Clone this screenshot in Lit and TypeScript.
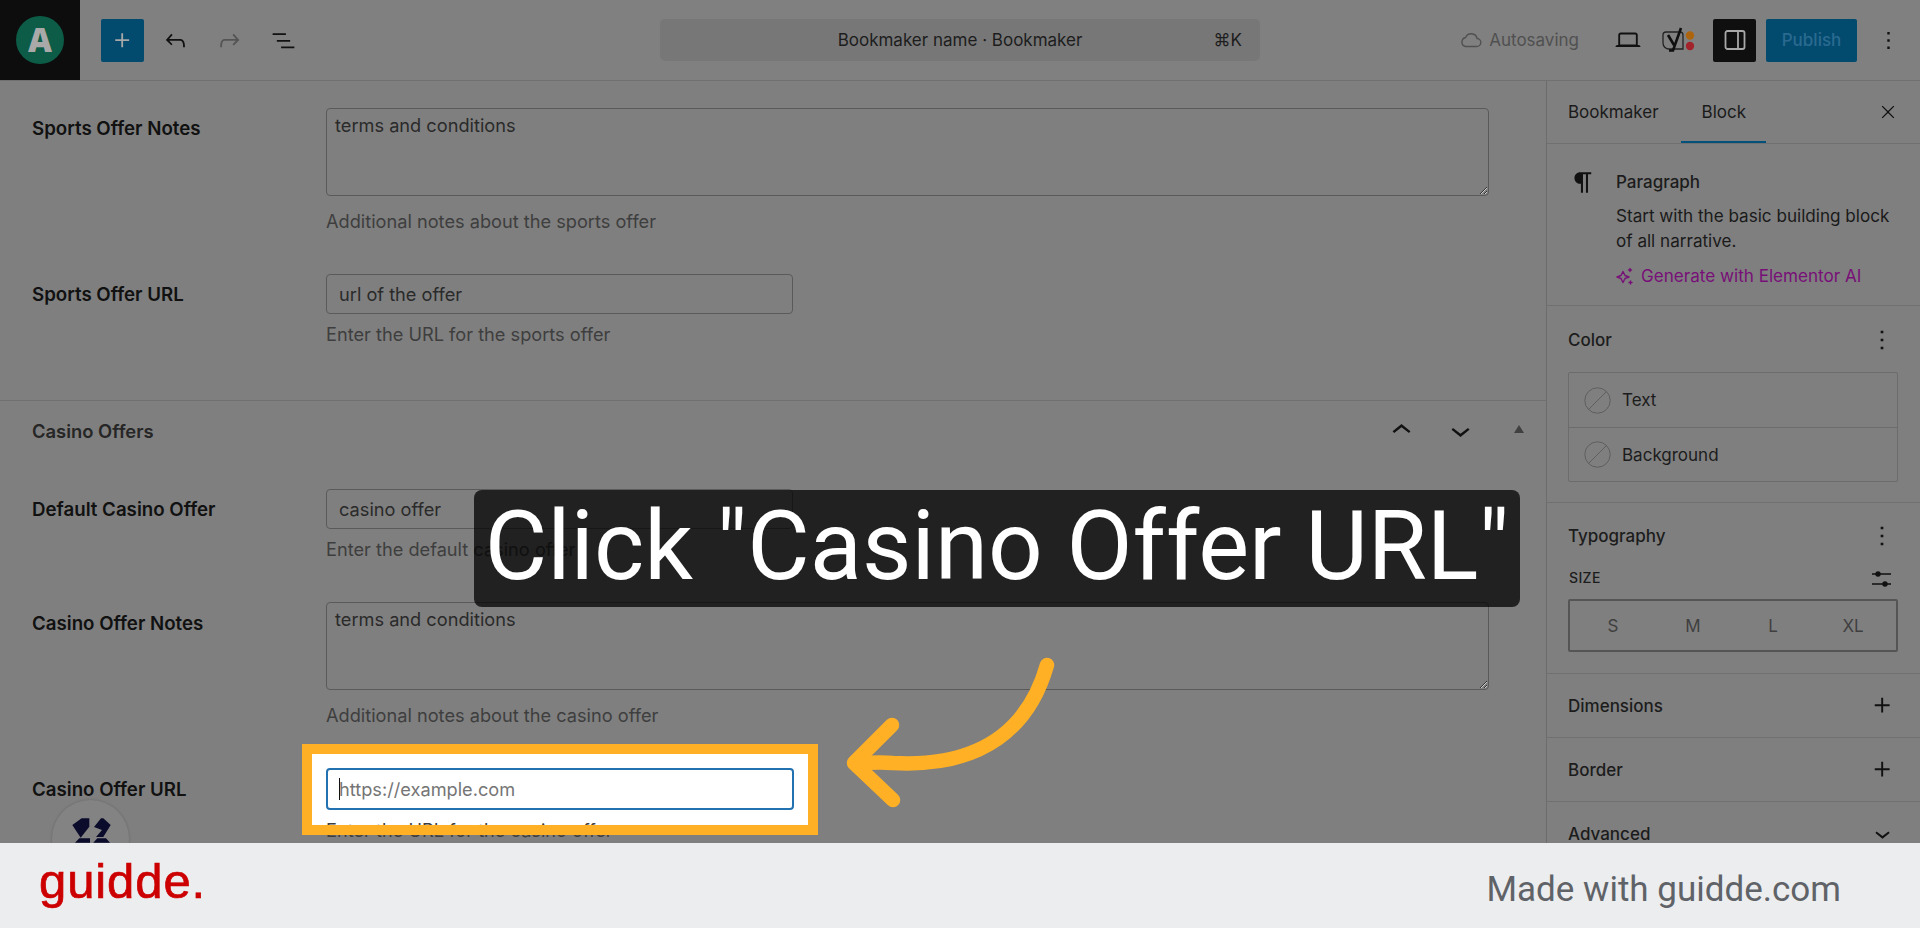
import { LitElement, html, css, svg } from "lit";
import { customElement } from "lit/decorators.js";

const icon = (d: string, size = 29, fill = "#111") => html`<svg width=${size} height=${size} viewBox="0 0 24 24" fill=${fill}><path d=${d}></path></svg>`;
const P = {
  undo: "M18.3 11.7c-.6-.6-1.4-.9-2.3-.9H6.7l2.9-3.3-1.1-1-4.5 5L8.5 16l1-1-2.7-2.7H16c.5 0 .9.2 1.3.5 1 1 1 3.4 1 4.5v.3h1.5v-.2c0-1.5 0-4.3-1.5-5.7z",
  redo: "M15.6 6.5l-1.1 1 2.9 3.3H8c-.9 0-1.7.3-2.3.9-1.4 1.5-1.4 4.2-1.4 5.6v.2h1.5v-.3c0-1.1 0-3.5 1-4.5.3-.3.7-.5 1.3-.5h9.2L14.5 15l1.1 1.1 4.6-4.6-4.6-5z",
  list: "M3 6h11v1.5H3V6zm3.5 5.5h11V13h-11v-1.5zM21 17H10v1.5h11V17z",
  plus: "M11 12.5V17.5H12.5V12.5H17.5V11H12.5V6H11V11H6V12.5H11Z",
  more: "M13 19h-2v-2h2v2zm0-6h-2v-2h2v2zm0-6h-2V5h2v2z",
  close: "m13.06 12 6.47-6.47-1.06-1.06L12 10.94 5.53 4.47 4.47 5.53 10.94 12l-6.47 6.47 1.06 1.06L12 13.06l6.47 6.47 1.06-1.06L13.06 12Z",
  up: "M6.5 12.4L12 8l5.5 4.4-.9 1.2L12 10l-4.5 3.6-1-1.2z",
  down: "M17.5 11.6L12 16l-5.5-4.4.9-1.2L12 14l4.6-3.6 1 1.2z",
  para: "M9.5 4C6.9 4 5 5.9 5 8.5S6.9 13 9.5 13h.5v7h1.6V5.6h2.3V20H15.5V5.6H18V4H9.5z",
  laptop: "M20.5 16h-.7V8c0-1.1-.9-2-2-2H6.2c-1.1 0-2 .9-2 2v8h-.7c-.8 0-1.5.7-1.5 1.5h20c0-.8-.7-1.5-1.5-1.5zM5.7 8c0-.3.2-.5.5-.5h11.6c.3 0 .5.2.5.5v7.6H5.7V8z",
};

@customElement("app-root")
export class AppRoot extends LitElement {
  static styles = css`
    :host { display: block; width: 1920px; height: 928px; overflow: hidden; position: relative; font-family: Inter, "Liberation Sans", sans-serif; color: #111; background: #7f7f7f; }
    * { box-sizing: border-box; }
    .page { display: flex; flex-direction: column; height: 928px; }

    .top { height: 81px; flex: none; display: flex; align-items: center; border-bottom: 1px solid #707070; background: #808080; position: relative; }
    .logo { width: 80px; height: 80px; background: #0d0d0d; display: flex; align-items: center; justify-content: center; flex: none; }
    .logo span { width: 48px; height: 48px; border-radius: 50%; background: #0c5c47; color: #a9a9a9; font: 800 33px/48px "Open Sans", sans-serif; text-align: center; }
    .add { width: 43px; height: 43px; margin-left: 21px; background: #034a6f; border-radius: 2px; display: flex; align-items: center; justify-content: center; flex: none; }
    .tools { display: flex; align-items: center; gap: 25px; margin-left: 17px; flex: none; }
    .cmd { position: absolute; left: 660px; top: 19px; width: 600px; height: 42px; background: #777; border-radius: 5px; display: flex; align-items: center; justify-content: center; font-size: 17px; color: #1d1d1d; }
    .cmd kbd { position: absolute; right: 18px; font: inherit; }
    .right { margin-left: auto; display: flex; align-items: center; flex: none; }
    .auto { display: flex; align-items: center; gap: 7px; color: #505050; font-size: 17px; margin-right: 34px; }
    .yoast { margin-left: 19px; width: 36px; height: 30px; flex: none; }
    .panel { width: 43px; height: 43px; background: #0f0f0f; border-radius: 2px; margin-left: 15px; display: flex; align-items: center; justify-content: center; }
    .publish { width: 91px; height: 43px; margin-left: 10px; background: #034a6f; color: #2a6a90; font-size: 17px; font-weight: 500; border-radius: 2px; display: flex; align-items: center; justify-content: center; }
    .dots { margin: 0 17px 0 17px; display: flex; }

    .body { flex: 1; min-height: 0; display: flex; overflow: hidden; position: relative; }
    .main { width: 1546px; flex: none; }
    .section { padding: 27px 57px 0 32px; }
    .s1 { height: 320px; border-bottom: 1px solid #707070; }
    .row { display: grid; grid-template-columns: 294px 1fr; margin-bottom: 43px; }
    .lab { font-size: 18.7px; font-weight: 600; line-height: 20px; padding-top: 11px; color: #111; white-space: nowrap; }
    .lab.low { padding-top: 12px; }
    .field { position: relative; min-width: 0; }
    .ta, .in { display: block; background: transparent; border: 1px solid #5a5a5a; border-radius: 4px; font: 400 18.2px/20px Inter, sans-serif; color: #2a2a2a; outline: none; margin: 0; }
    .ta { width: 100%; height: 88px; padding: 6px 8px; resize: vertical; }
    .ta + .help { margin-top: 15px; }
    .in { width: 467px; height: 40px; padding: 0 12px; }
    .help { font-size: 18.2px; line-height: 20px; color: #3e3e3e; margin-top: 10px; white-space: nowrap; position: relative; }
    .head { display: flex; align-items: center; height: 59px; margin-bottom: 1px; padding: 0 22px 0 32px; font-size: 18.4px; font-weight: 600; color: #262626; }
    .head .sp { flex: 1; }
    .head .ctrl { width: 59px; display: flex; justify-content: center; }
    .head .tri { width: 0; height: 0; border-left: 5.5px solid transparent; border-right: 5.5px solid transparent; border-bottom: 8px solid #404040; margin: 0 0 3px 24px; }
    .s2 { padding-top: 28px; }
    .hl-white { position: absolute; left: -24px; top: -24px; width: 506px; height: 81px; background: #fff; }
    .hl-ring { position: absolute; left: -24px; top: -24px; width: 516px; height: 91px; border: 10px solid #ffb024; margin: 0; z-index: 2; }
    .focus { position: relative; width: 468px; height: 42px; border: 2px solid #2271b1; border-radius: 4px; background: #fff; padding: 0 11px; font: 400 18.2px/38px Inter, sans-serif; color: #757575; outline: none; display: block; }
    .focus::placeholder { color: #757575; }
    .caret { position: absolute; left: 13px; top: 10px; width: 1px; height: 22px; background: #111; }

    .side { flex: 1; border-left: 1px solid #6c6c6c; min-width: 0; }
    .tabs { height: 63px; display: flex; align-items: center; position: relative; border-bottom: 1px solid #707070; padding-left: 21px; font-size: 17px; color: #1a1a1a; }
    .tab { margin-right: 43px; }
    .tab.on { position: relative; }
    .tab.on::after { content: ""; position: absolute; left: -21px; right: -20px; top: 39px; height: 2px; background: #03507a; }
    .tabs .x { position: absolute; right: 22px; top: 21px; display: flex; }
    .block { height: 162px; padding: 28px 21px 0; display: flex; border-bottom: 1px solid #707070; }
    .pico { width: 48px; flex: none; margin-top: -5px; }
    .block .t { font-size: 17px; line-height: 20px; font-weight: 500; color: #1c1c1c; }
    .block .d { font-size: 17.1px; line-height: 25px; color: #1a1a1a; margin-top: 11px; white-space: nowrap; }
    .gen { display: flex; align-items: center; gap: 7px; color: #780f78; font-size: 17.1px; margin-top: 12px; white-space: nowrap; }
    .pan { padding: 0 21px; border-bottom: 1px solid #707070; }
    .ph { display: flex; align-items: center; justify-content: space-between; font-size: 17px; font-weight: 500; color: #1c1c1c; margin-right: 1px; }
    .color { height: 197px; padding-top: 20px; }
    .ph.first { height: 28px; }
    .cbox { margin-top: 18px; border: 1px solid #6c6c6c; border-radius: 2px; height: 110px; width: 330px; }
    .crow { height: 54px; display: flex; align-items: center; gap: 11px; padding-left: 15px; font-size: 17px; color: #1c1c1c; }
    .crow + .crow { border-top: 1px solid #6c6c6c; }
    .typo { height: 171px; padding-top: 19px; }
    .szh { display: flex; align-items: center; justify-content: space-between; margin-top: 16px; font-size: 14px; font-weight: 500; letter-spacing: .35px; color: #1c1c1c; height: 22px; padding-left: 1px; }
    .slid { margin-right: 7px; margin-top: 3px; }
    .szb { margin-top: 11px; width: 330px; height: 53px; border: 2px solid #555; border-radius: 2px; display: grid; grid-template-columns: repeat(4, 80px); padding-left: 3px; align-items: center; font-size: 17px; color: #3f3f3f; text-align: center; }
    .acc { height: 64px; display: flex; align-items: center; justify-content: space-between; padding: 0 22px 0 21px; font-size: 17px; font-weight: 500; color: #1c1c1c; border-bottom: 1px solid #707070; flex: none; }

    .widget { position: absolute; left: 52px; top: 719px; width: 77px; height: 77px; border-radius: 50%; background: #838383; box-shadow: 0 0 3px rgba(0,0,0,.2); }

    .foot { height: 85px; flex: none; background: #ecedef; display: flex; align-items: center; justify-content: space-between; padding: 0 79px 0 39px; position: relative; z-index: 5; }
    .brand { color: #cc0000; font: 400 49px/1 "Liberation Sans", sans-serif; letter-spacing: .9px; margin-top: -8px; -webkit-text-stroke: .7px #cc0000; }
    .made { color: #5f6368; font: 400 35px/1 Roboto, sans-serif; margin-top: 8px; }

    .callout { position: absolute; left: 474px; top: 490px; width: 1046px; height: 117px; background: rgba(0,0,0,.74); border-radius: 8px; color: #fff; font: 400 96px/113px Roboto, sans-serif; text-align: center; white-space: nowrap; z-index: 4; }
    .arrow { position: absolute; left: 0; top: 0; z-index: 4; }
  `;

  private sparkle() {
    return html`<svg width="18" height="18" viewBox="0 0 18 18" fill="none" stroke="#780f78" stroke-width="1.4"><path d="M7 4.5 9 8.5 13 10 9 11.5 7 15.5 5 11.5 1 10 5 8.5z" stroke-linejoin="round"></path><path d="M14 1.5v3M12.5 3h3M14.5 14v3M13 15.5h3" stroke-linecap="round"></path></svg>`;
  }
  private swatch() {
    return html`<svg width="27" height="27" viewBox="0 0 27 27" fill="none" stroke="#5f5f5f"><circle cx="13.5" cy="13.5" r="12.7"></circle><path d="M4.5 22.5 22.5 4.5"></path></svg>`;
  }

  render() {
    return html`
      <div class="page">
        <header class="top">
          <div class="logo"><span>A</span></div>
          <div class="add">${icon(P.plus, 29, "#a8a8a8")}</div>
          <div class="tools">
            ${icon(P.undo)}${icon(P.redo, 29, "#545454")}${icon(P.list)}
          </div>
          <div class="cmd">Bookmaker name · Bookmaker<kbd>⌘K</kbd></div>
          <div class="right">
            <div class="auto">
              <svg width="22" height="18" viewBox="0 0 22 18" fill="none" stroke="#505050" stroke-width="1.4"><path d="M5.5 15.5h11a4 4 0 0 0 .6-8 6 6 0 0 0-11.4-1 4.6 4.6 0 0 0-.2 9z"></path></svg>
              Autosaving
            </div>
            ${icon(P.laptop, 30)}
            <svg class="yoast" viewBox="0 0 36 30">
              <path d="M4 7h14a3 3 0 0 1 3 3v14H7a6 6 0 0 1-6-6V10a3 3 0 0 1 3-3z" fill="none" stroke="#222" stroke-width="1.3"></path>
              <path d="M6 10 12 20M19 3 11 25.500H7" fill="none" stroke="#0f0f0f" stroke-width="2.6"></path>
              <circle cx="28" cy="10.500" r="4.200" fill="#ac640f"></circle>
              <circle cx="28" cy="21" r="4.200" fill="#a3232b"></circle>
            </svg>
            <div class="panel">
              <svg width="22" height="22" viewBox="0 0 22 22" fill="none" stroke="#a8a8a8" stroke-width="1.8"><rect x="1.5" y="2" width="19" height="18" rx="2"></rect><path d="M14 2v18"></path></svg>
            </div>
            <div class="publish">Publish</div>
            <div class="dots">${icon(P.more, 29)}</div>
          </div>
        </header>

        <div class="body">
          <main class="main">
            <section class="section s1">
              <div class="row">
                <div class="lab">Sports Offer Notes</div>
                <div class="field">
                  <textarea class="ta">terms and conditions</textarea>
                  <div class="help">Additional notes about the sports offer</div>
                </div>
              </div>
              <div class="row">
                <div class="lab">Sports Offer URL</div>
                <div class="field">
                  <input class="in" .value=${"url of the offer"} />
                  <div class="help">Enter the URL for the sports offer</div>
                </div>
              </div>
            </section>
            <div class="head">
              Casino Offers<span class="sp"></span>
              <span class="ctrl">${icon(P.up, 39)}</span>
              <span class="ctrl">${icon(P.down, 39)}</span>
              <span class="tri"></span>
            </div>
            <section class="section s2">
              <div class="row">
                <div class="lab">Default Casino Offer</div>
                <div class="field">
                  <input class="in" .value=${"casino offer"} />
                  <div class="help">Enter the default casino offer</div>
                </div>
              </div>
              <div class="row">
                <div class="lab low">Casino Offer Notes</div>
                <div class="field">
                  <textarea class="ta">terms and conditions</textarea>
                  <div class="help">Additional notes about the casino offer</div>
                </div>
              </div>
              <div class="row">
                <div class="lab low">Casino Offer URL</div>
                <div class="field">
                  <div class="hl-white"></div>
                  <input class="focus" placeholder="https://example.com" />
                  <span class="caret"></span>
                  <div class="help">Enter the URL for the casino offer</div>
                  <div class="hl-ring"></div>
                </div>
              </div>
            </section>
          </main>

          <aside class="side">
            <div class="tabs">
              <span class="tab">Bookmaker</span>
              <span class="tab on">Block</span>
              <span class="x">${icon(P.close, 20)}</span>
            </div>
            <div class="block">
              <div class="pico">${icon(P.para, 31)}</div>
              <div>
                <div class="t">Paragraph</div>
                <div class="d">Start with the basic building block<br />of all narrative.</div>
                <div class="gen">${this.sparkle()}Generate with Elementor AI</div>
              </div>
            </div>
            <div class="pan color">
              <div class="ph first">Color ${icon(P.more, 32)}</div>
              <div class="cbox">
                <div class="crow">${this.swatch()}Text</div>
                <div class="crow">${this.swatch()}Background</div>
              </div>
            </div>
            <div class="pan typo">
              <div class="ph first">Typography ${icon(P.more, 32)}</div>
              <div class="szh">SIZE
                <svg class="slid" width="20" height="16" viewBox="0 0 20 16" fill="#111" stroke="#111" stroke-width="1.4"><path d="M0 3h19M0 13h19" fill="none"></path><circle cx="6" cy="3" r="2"></circle><circle cx="13" cy="13" r="2"></circle></svg>
              </div>
              <div class="szb"><span>S</span><span>M</span><span>L</span><span>XL</span></div>
            </div>
            <div class="acc">Dimensions ${icon(P.plus, 31)}</div>
            <div class="acc">Border ${icon(P.plus, 31)}</div>
            <div class="acc">Advanced ${icon(P.down, 31)}</div>
          </aside>

          <div class="widget">
            <svg width="77" height="77" viewBox="0 0 77 77" fill="#0b0b2b">
              <path d="M20.300 25 29.700 18.300H37.300V26.700L28.700 37.700z"></path>
              <path d="M42 27 49 18.300H51.300L58.700 25 51.300 37H44L50 30z"></path>
              <path d="M23 42.700 27.300 38.300H38V42.700zM41.300 42.700 45.300 38.300H54L58 42.700z"></path>
            </svg>
          </div>
        </div>

        <footer class="foot">
          <div class="brand">guidde.</div>
          <div class="made">Made with guidde.com</div>
        </footer>
      </div>

      <div class="callout">Click "Casino Offer URL"</div>
      <svg class="arrow" width="1920" height="928" fill="none" stroke="#ffb024" stroke-width="14.5" stroke-linecap="round" stroke-linejoin="round">
        ${svg`<path d="M1047 665C1030 725 985 768 893 763C880 762 870 763 855 763"></path><path d="M892 725 854 763 893 800"></path>`}
      </svg>
    `;
  }
}
